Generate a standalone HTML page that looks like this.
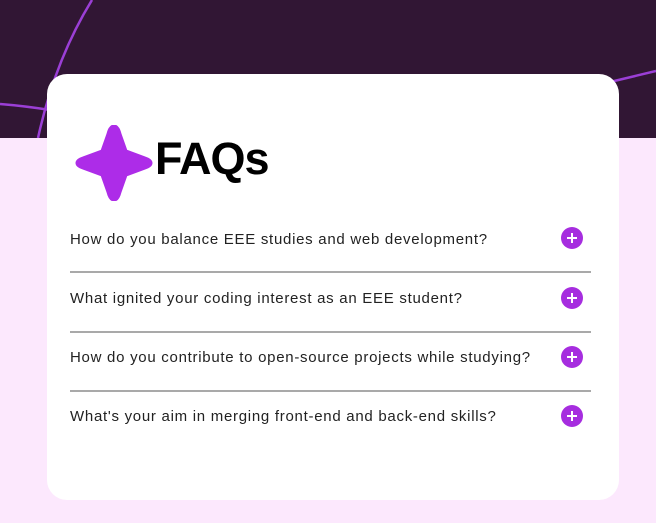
<!DOCTYPE html>
<html><head><meta charset="utf-8"><style>
body{margin:0;width:656px;height:523px;overflow:hidden;background:#fce8fd;font-family:"Liberation Sans",sans-serif;position:relative}
.top{position:absolute;left:0;top:0;width:656px;height:138px;background:#311634;overflow:hidden}
.card{position:absolute;left:47px;top:74px;width:572px;height:426px;background:#fff;border-radius:20px}
.h{position:absolute;left:155px;top:133px;font-size:45px;font-weight:bold;color:#000;letter-spacing:-1px}
.q{position:absolute;left:70px;font-size:15px;color:#222;letter-spacing:0.72px}
.line{position:absolute;left:70px;width:521px;height:2px;background:#a9a9a9}
.p{position:absolute;left:561px;width:22px;height:22px;border-radius:50%;background:#a62ddf}
.p:before{content:"";position:absolute;left:6px;top:10px;width:10px;height:2px;background:#fff}
.p:after{content:"";position:absolute;left:10px;top:6px;width:2px;height:10px;background:#fff}
</style></head><body>
<div class="top"><svg width="656" height="138">
<path d="M92 0 Q55 60 38 138" stroke="#9b3fd6" stroke-width="2.5" fill="none"/>
<path d="M0 104 Q25 106 50 110" stroke="#9b3fd6" stroke-width="2.5" fill="none"/>
<path d="M610 82 Q635 76 656 71" stroke="#9b3fd6" stroke-width="2.5" fill="none"/>
</svg></div>
<div class="card"></div>
<svg style="position:absolute;left:75px;top:125px" width="78" height="76" viewBox="0 0 78 76">
<path d="M39 1 Q43 1 45 9 L51 26 L70 33 Q76 35 76 38 Q76 41 70 43 L51 50 L45 67 Q43 75 39 75 Q35 75 33 67 L27 50 L8 43 Q2 41 2 38 Q2 35 8 33 L27 26 L33 9 Q35 1 39 1Z" fill="#ad2ce8" stroke="#ad2ce8" stroke-width="3" stroke-linejoin="round"/>
</svg>
<div class="h">FAQs</div>
<div class="q" style="top:231px">How do you balance EEE studies and web development?</div>
<div class="p" style="top:227px"></div>
<div class="line" style="top:271px"></div>
<div class="q" style="top:290px">What ignited your coding interest as an EEE student?</div>
<div class="p" style="top:287px"></div>
<div class="line" style="top:331px"></div>
<div class="q" style="top:349px">How do you contribute to open-source projects while studying?</div>
<div class="p" style="top:346px"></div>
<div class="line" style="top:390px"></div>
<div class="q" style="top:408px">What's your aim in merging front-end and back-end skills?</div>
<div class="p" style="top:405px"></div>
</body></html>
